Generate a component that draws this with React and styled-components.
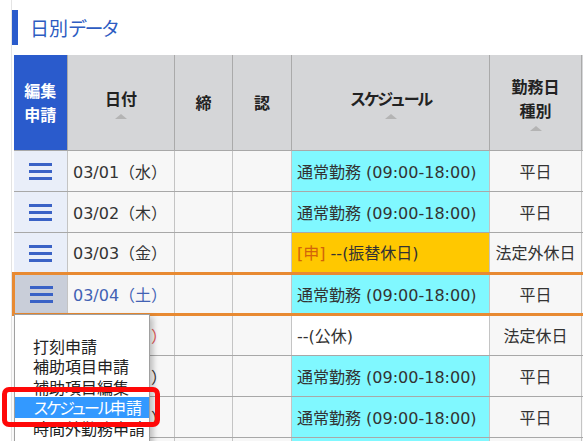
import React from 'react';
import styled, { createGlobalStyle } from 'styled-components';

const Global = createGlobalStyle`
  html, body {
    margin: 0;
    padding: 0;
    overflow: hidden;
    background: #fff;
  }
  body {
    font-family: "DejaVu Sans", "Noto Sans CJK JP", sans-serif;
    color: #333;
  }
`;

const Page = styled.div`
  position: relative;
  width: 583px;
  height: 441px;
  overflow: hidden;
  padding-left: 11px;
  box-sizing: border-box;
`;

const Content = styled.div`
  border-left: 1px solid #e4e4e4;
  height: 100%;
`;

const Heading = styled.div`
  height: 55px;
  display: flex;
  align-items: flex-start;
  padding-top: 10px;
  box-sizing: border-box;
`;

const Accent = styled.div`
  width: 6px;
  height: 35px;
  background: #2a5bcc;
  margin-right: 12px;
`;

const HeadingText = styled.h2`
  margin: 0;
  font-family: "Noto Sans CJK JP", sans-serif;
  font-size: 19px;
  font-weight: 400;
  line-height: 35px;
  color: #2d5cc2;
`;

// katakana in the original font are narrower than full width
const Kana = styled.span`
  letter-spacing: ${p => p.$tight || -3}px;
`;

const Table = styled.table`
  border-collapse: collapse;
  table-layout: fixed;
  width: 668px;
`;

const Th = styled.th`
  height: 95px;
  padding: 0;
  box-sizing: border-box;
  background: ${p => (p.$edit ? '#2a5bcc' : '#d5d6d8')};
  color: ${p => (p.$edit ? '#fff' : '#222')};
  border-left: 1px solid ${p => (p.$edit ? '#2a5bcc' : '#aaa')};
  font-family: "Noto Sans CJK JP", sans-serif;
  font-size: 16px;
  font-weight: 700;
  line-height: 24px;
  text-align: center;
  vertical-align: middle;
  &:first-child {
    border-left: none;
  }
`;

const SortArrow = styled.span`
  display: block;
  width: 0;
  height: 0;
  margin: 4px auto 0;
  border-left: 6px solid transparent;
  border-right: 6px solid transparent;
  border-bottom: 5px solid #b4b4b4;
`;

const Tr = styled.tr`
  height: 41px;
`;

const Td = styled.td`
  padding: 0 0 0 5px;
  box-sizing: border-box;
  height: 41px;
  font-size: 16px;
  white-space: nowrap;
  overflow: hidden;
  background: #f7f7f7;
  border: 1px solid #c4c4c4;
  border-top: 1px solid #a8a8a8;
  border-bottom: 1px solid #a8a8a8;
  color: ${p => p.$color || '#333'};
  text-align: ${p => (p.$center ? 'center' : 'left')};
  ${p => p.$center && 'padding: 0;'}
  ${p => p.$hot && 'border-top: 3px solid #e88a32; border-bottom: 3px solid #e88a32;'}
`;

const EditCell = styled(Td)`
  padding: 0;
  text-align: center;
  border-left: none;
  background: ${p => (p.$hot ? '#c9ced9' : '#e9eef9')};
  ${p => p.$hot && 'border-left: 3px solid #e88a32;'}
`;

const ScheduleCell = styled(Td)`
  background: ${p => p.$bg};
`;

const Applied = styled.span`
  color: #d2640a;
`;

const Burger = styled.span`
  display: inline-flex;
  flex-direction: column;
  gap: 4px;
  vertical-align: middle;
  span {
    display: block;
    width: 23px;
    height: 3px;
    background: #3a62c6;
  }
`;

const Menu = styled.ul`
  position: absolute;
  left: 14px;
  top: 314px;
  width: 134px;
  margin: 0;
  padding: 0;
  list-style: none;
  background: #fff;
  border: 1px solid #a0a0a0;
  border-bottom: none;
  box-shadow: 3px 3px 6px rgba(0, 0, 0, 0.25);
  height: 140px;
`;

const MenuItem = styled.li`
  height: 20.5px;
  line-height: 20.5px;
  padding-left: 18px;
  font-family: "Noto Sans CJK JP", sans-serif;
  font-size: 16px;
  white-space: nowrap;
  color: ${p => (p.$active ? '#fff' : '#222')};
  background: ${p => (p.$active ? '#3399ff' : 'transparent')};
`;

const Callout = styled.div`
  position: absolute;
  left: 2px;
  top: 387px;
  width: 158px;
  height: 40px;
  box-sizing: border-box;
  border: 5px solid #ff0808;
  border-radius: 7px;
`;

const rows = [
  { date: '03/01（水）', sched: '通常勤務 (09:00-18:00)', bg: '#80f8ff', kind: '平日' },
  { date: '03/02（木）', sched: '通常勤務 (09:00-18:00)', bg: '#80f8ff', kind: '平日' },
  { date: '03/03（金）', sched: '--(振替休日)', applied: true, bg: '#ffc800', kind: '法定外休日' },
  { date: '03/04（土）', sched: '通常勤務 (09:00-18:00)', bg: '#80f8ff', kind: '平日', hot: true, color: '#4262b4' },
  { date: '03/05（日）', sched: '--(公休)', bg: '#fff', kind: '法定休日', color: '#e05858' },
  { date: '03/06（月）', sched: '通常勤務 (09:00-18:00)', bg: '#80f8ff', kind: '平日' },
  { date: '03/07（火）', sched: '通常勤務 (09:00-18:00)', bg: '#80f8ff', kind: '平日' },
  { date: '03/08（水）', sched: '通常勤務 (09:00-18:00)', bg: '#80f8ff', kind: '平日' },
];

const menuItems = [
  { label: '' },
  { label: '打刻申請' },
  { label: '補助項目申請' },
  { label: '補助項目編集' },
  { kana: 'スケジュール', label: '申請', active: true },
  { label: '時間外勤務申請' },
];

export default function App() {
  return (
    <>
      <Global />
      <Page>
        <Content>
          <Heading>
            <Accent />
            <HeadingText>日別<Kana $tight={-2.5}>データ</Kana></HeadingText>
          </Heading>
          <Table>
            <colgroup>
              <col style={{ width: 54 }} />
              <col style={{ width: 107 }} />
              <col style={{ width: 58 }} />
              <col style={{ width: 59 }} />
              <col style={{ width: 198 }} />
              <col style={{ width: 92 }} />
              <col style={{ width: 100 }} />
            </colgroup>
            <thead>
              <tr>
                <Th $edit>編集<br />申請</Th>
                <Th>日付<SortArrow /></Th>
                <Th>締</Th>
                <Th>認</Th>
                <Th><Kana $tight={-2.3}>スケジュール</Kana><SortArrow /></Th>
                <Th>勤務日<br />種別<SortArrow /></Th>
                <Th />
              </tr>
            </thead>
            <tbody>
              {rows.map((r, i) => (
                <Tr key={i}>
                  <EditCell $hot={r.hot}>
                    <Burger><span /><span /><span /></Burger>
                  </EditCell>
                  <Td $hot={r.hot} $color={r.color}>{r.date}</Td>
                  <Td $hot={r.hot} />
                  <Td $hot={r.hot} />
                  <ScheduleCell $hot={r.hot} $bg={r.bg}>
                    {r.applied && <Applied>[申] </Applied>}
                    {r.sched}
                  </ScheduleCell>
                  <Td $hot={r.hot} $center>{r.kind}</Td>
                  <Td $hot={r.hot} />
                </Tr>
              ))}
            </tbody>
          </Table>
        </Content>
        <Menu>
          {menuItems.map((m, i) => (
            <MenuItem key={i} $active={m.active}>
              {m.kana && <Kana>{m.kana}</Kana>}
              {m.label}
            </MenuItem>
          ))}
        </Menu>
        <Callout />
      </Page>
    </>
  );
}
